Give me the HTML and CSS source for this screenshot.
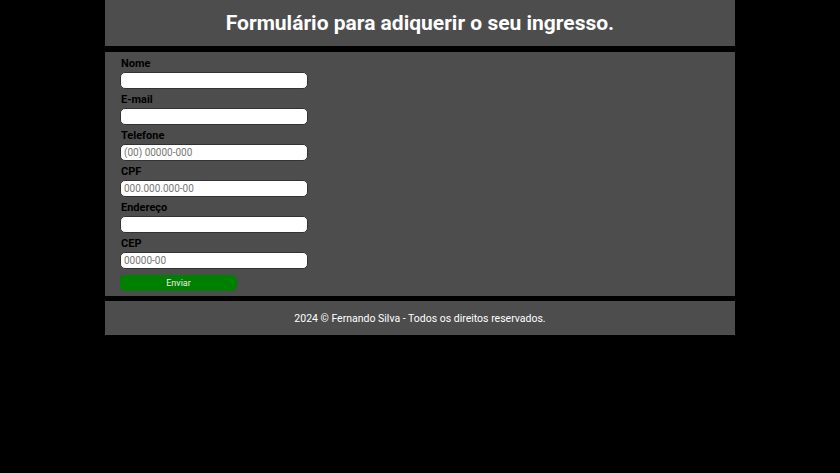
FILE: index.html
```html
<!DOCTYPE html>
<html lang="pt-BR">
<head>
<meta charset="utf-8">
<title>Ingresso</title>
<link rel="stylesheet" href="styles.css">
</head>
<body>
<div class="page">
  <header class="header">
    <h1 class="title">Formulário para adiquerir o seu ingresso.</h1>
  </header>
  <main class="main">
    <form class="form">
      <label class="label" for="nome">Nome</label>
      <input class="input" id="nome" type="text">
      <label class="label" for="email">E-mail</label>
      <input class="input" id="email" type="email">
      <label class="label" for="tel">Telefone</label>
      <input class="input" id="tel" type="text" placeholder="(00) 00000-000">
      <label class="label" for="cpf">CPF</label>
      <input class="input" id="cpf" type="text" placeholder="000.000.000-00">
      <label class="label" for="end">Endereço</label>
      <input class="input" id="end" type="text">
      <label class="label" for="cep">CEP</label>
      <input class="input" id="cep" type="text" placeholder="00000-00">
      <button class="button" type="button">Enviar</button>
    </form>
  </main>
  <footer class="footer">
    <p class="footer-text">2024 © Fernando Silva - Todos os direitos reservados.</p>
  </footer>
</div>
</body>
</html>
```

FILE: styles.css
```css
html, body {
  margin: 0;
  padding: 0;
  background: #000;
  font-family: Roboto, "Liberation Sans", Arial, sans-serif;
}
.page {
  width: 630px;
  margin: 0 auto;
  display: flex;
  flex-direction: column;
  gap: 5px;
}
.header, .main, .footer {
  background: #4d4d4d;
  box-sizing: border-box;
}
.header {
  height: 46px;
  display: flex;
  align-items: center;
  justify-content: center;
}
.title {
  margin: 0;
  color: #fff;
  font-size: 21px;
  font-weight: 700;
}
.main {
  margin-top: 1px;
  padding: 4px 15px 5px 15px;
}
.form {
  display: flex;
  flex-direction: column;
  align-items: flex-start;
}
.label {
  display: block;
  font-size: 11px;
  font-weight: 700;
  line-height: 14px;
  color: #000;
  padding-top: 1px;
  margin: 0 0 1px 1px;
}
.input {
  box-sizing: border-box;
  width: 188px;
  height: 17px;
  margin: 0 0 3px 0;
  padding: 0 3px;
  border: 1px solid #333;
  border-radius: 5px;
  background: #fff;
  font-family: Roboto, "Liberation Sans", Arial, sans-serif;
  font-size: 10px;
}
.input::placeholder {
  color: #777;
}
.button {
  margin-top: 3px;
  width: 117px;
  height: 16px;
  border: none;
  border-radius: 5px;
  background: #008000;
  color: #eee;
  font-family: Roboto, "Liberation Sans", Arial, sans-serif;
  font-size: 9px;
  padding: 0;
}
.footer {
  height: 34px;
  display: flex;
  align-items: center;
  justify-content: center;
}
.footer-text {
  margin: 0;
  color: #fff;
  font-size: 10.5px;
}
```
